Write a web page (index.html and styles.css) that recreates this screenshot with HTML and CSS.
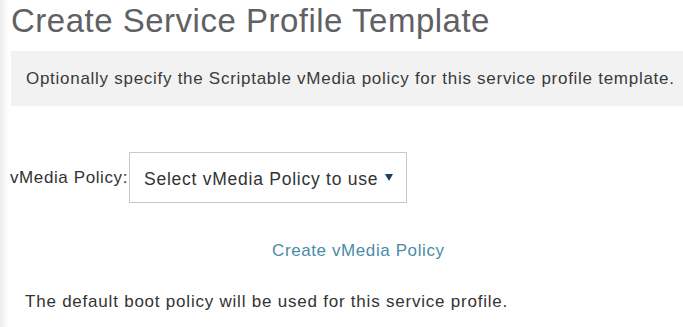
FILE: index.html
```html
<!DOCTYPE html>
<html lang="en">

<head>
  <meta charset="UTF-8" />
  <meta name="viewport" content="width=device-width, initial-scale=1.0" />
  <title>Create Service Profile Template</title>
  <link rel="stylesheet" href="styles.css">
</head>

<body>
  <div class="page">
    <h1 class="title">Create Service Profile Template</h1>

    <div class="intro">
      Optionally specify the Scriptable vMedia policy for this service profile template.
    </div>

    <div class="form-row">
      <label class="form-label" for="vmediaPolicy">vMedia Policy:</label>
      <div class="select-box" id="vmediaPolicy">
        <span>Select vMedia Policy to use</span>
        <span class="caret"></span>
      </div>
    </div>

    <div class="link-row">
      <a href="#" class="create-link">Create vMedia Policy</a>
    </div>

    <p class="note">The default boot policy will be used for this service profile.</p>
  </div>
</body>

</html>
```

FILE: styles.css
```css
body {
  font-family: "Liberation Sans", Arial, sans-serif;
  margin: 0;
  padding: 0;
  background: linear-gradient(to right, #ececec 0, #ffffff 8px);
  color: #333333;
  min-height: 100vh;
}

.page {
  padding-left: 11px;
}

.title {
  margin: 0;
  padding-top: 3px;
  font-size: 33px;
  line-height: 36px;
  font-weight: normal;
  color: #606164;
  letter-spacing: 0.5px;
}

/* grey info band */
.intro {
  margin-top: 12px;
  height: 55px;
  line-height: 55px;
  padding-left: 15px;
  background-color: #f2f2f2;
  font-size: 17px;
  letter-spacing: 0.72px;
  color: #3a3a3a;
  white-space: nowrap;
}

.form-row {
  display: flex;
  align-items: flex-start;
  margin-top: 46px;
  margin-left: -1px;
}

.form-label {
  font-size: 17px;
  letter-spacing: 0.6px;
  padding-top: 16px;
  color: #333333;
  white-space: nowrap;
}

.select-box {
  box-sizing: border-box;
  width: 278px;
  height: 51px;
  margin-left: 1px;
  border: 1px solid #c8c8c8;
  display: flex;
  align-items: center;
  padding: 4px 0 0 14px;
  font-size: 17.5px;
  letter-spacing: 0.75px;
  color: #333333;
  white-space: nowrap;
}

/* small navy triangle */
.select-box .caret {
  width: 0;
  height: 0;
  border-left: 4.5px solid transparent;
  border-right: 4.5px solid transparent;
  border-top: 7px solid #1d3f5f;
  margin-left: 7px;
  margin-top: -5px;
}

.link-row {
  margin-top: 38px;
  padding-left: 261px;
}

.create-link {
  font-size: 17px;
  letter-spacing: 0.6px;
  color: #4a8ca6;
  text-decoration: none;
}

.note {
  margin: 31px 0 0 14px;
  font-size: 17px;
  letter-spacing: 0.78px;
  color: #333333;
}
```
